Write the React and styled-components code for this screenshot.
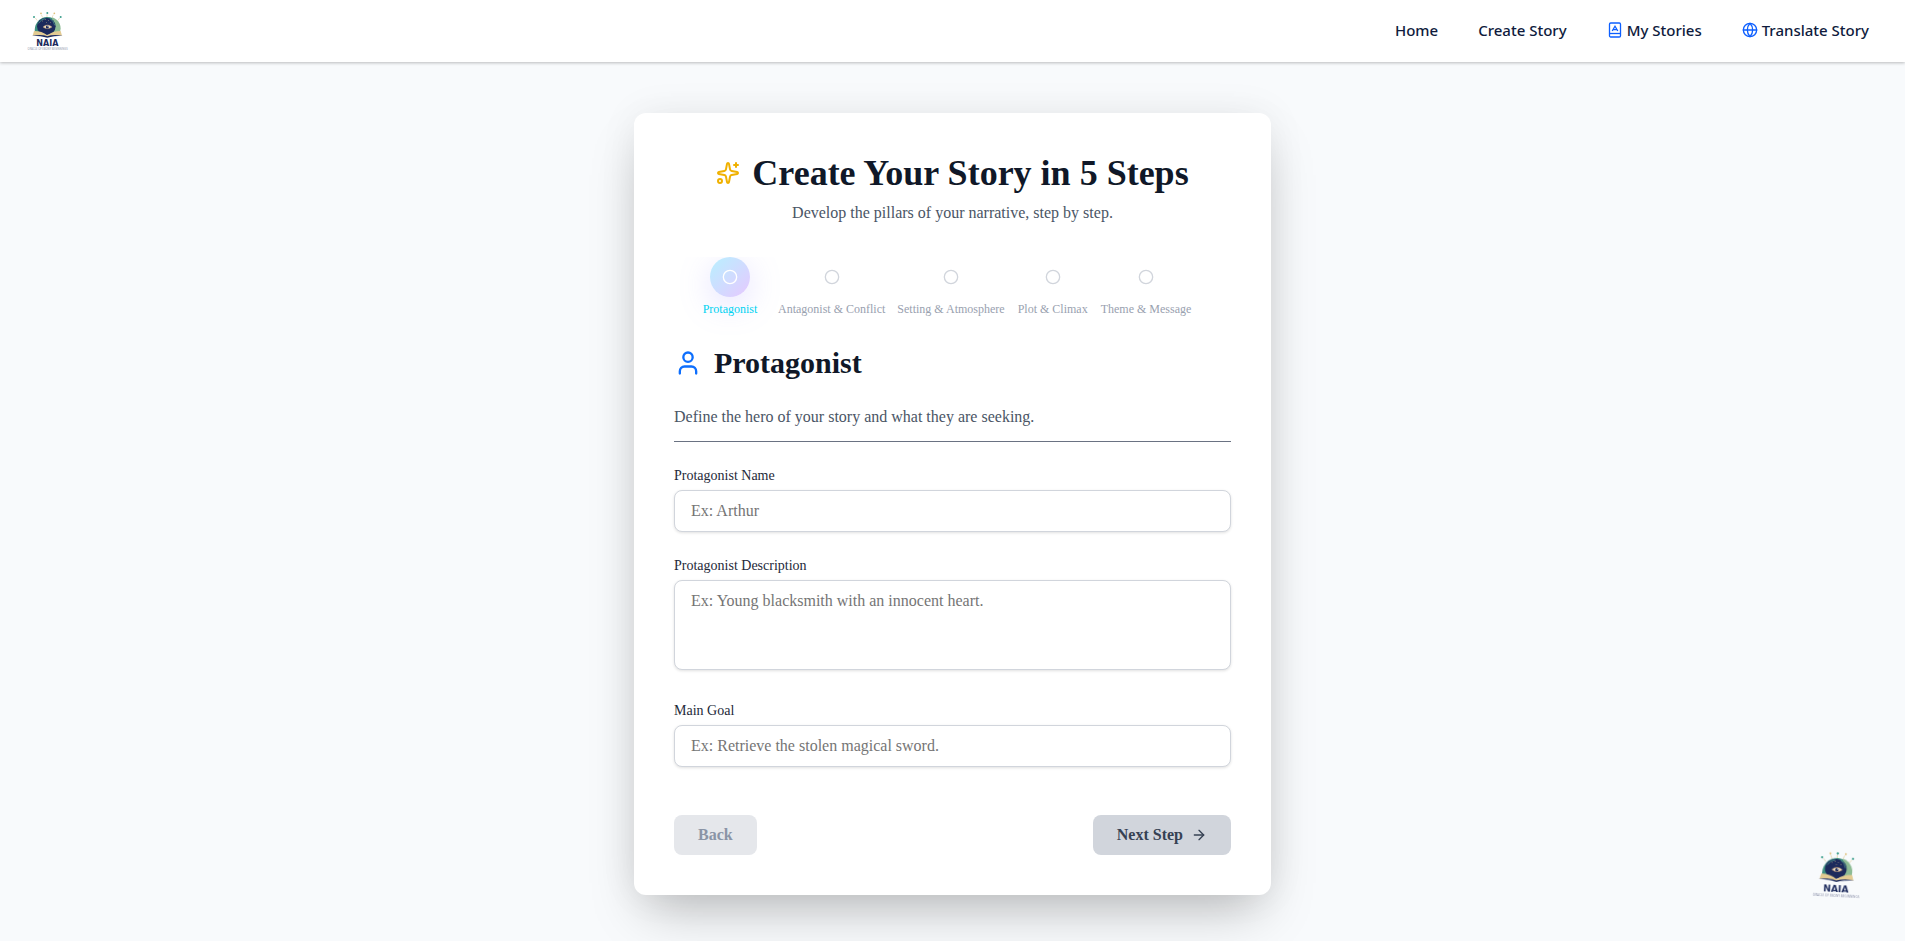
import React from 'react'
import styled, { createGlobalStyle, css } from 'styled-components'
import { ArrowRight, Circle, Globe, Sparkles, User } from 'lucide-react'

const steps = [
  'Protagonist',
  'Antagonist & Conflict',
  'Setting & Atmosphere',
  'Plot & Climax',
  'Theme & Message'
]

const BookIcon = () => (
  <svg width='16' height='16' viewBox='0 0 16 16' fill='none' stroke='currentColor' strokeWidth='1.3' aria-hidden='true'>
    <rect x='2.5' y='1' width='11' height='14' rx='1.2' />
    <path d='M2.5 11.5h11' />
    <path d='M5.2 9 8 4.2 10.8 9M6.3 7.6h3.4' />
  </svg>
)

const NaiaLogo = () => (
  <svg viewBox='80 28 132 126' role='img' aria-label='NAIA'>
    <path d='M108 52l6 8M126 42l4 9M143 41v8M162 42l-4 9M181 52l-6 8' stroke='#d8c48a' strokeWidth='1.5' />
    <circle cx='104' cy='49' r='3' fill='#3fa08e' />
    <circle cx='125' cy='38' r='2.6' fill='#e0bf7a' />
    <circle cx='144' cy='37' r='3' fill='#3fa08e' />
    <circle cx='165' cy='38' r='2.6' fill='#e0bf7a' />
    <circle cx='184' cy='49' r='3' fill='#3fa08e' />
    <path d='M107 98a38 40 0 1 1 74 0z' fill='#3d8f7f' />
    <path d='M158 50a36 34 0 0 1 22 48h-16z' fill='#8dbb94' />
    <ellipse cx='141' cy='77' rx='28' ry='26' fill='#1c2a5c' />
    <path d='M118 68q8-14 20-14M152 54q12 6 14 20' stroke='#4fa393' strokeWidth='2' fill='none' />
    <g fill='#d9c48c'>
      <circle cx='130' cy='61' r='1.2' />
      <circle cx='138' cy='57' r='1.2' />
      <circle cx='147' cy='60' r='1.2' />
      <circle cx='154' cy='65' r='1.2' />
      <circle cx='142' cy='66' r='1.2' />
    </g>
    <path d='M131 79q13-12 27 0-14 10-27 0z' fill='#f2e3c4' stroke='#b98c6a' strokeWidth='1.5' />
    <circle cx='144' cy='79' r='4.5' fill='#1c2a5c' />
    <circle cx='146' cy='77' r='1.5' fill='#fff' />
    <path d='M104 91q24 0 40 13 16-13 40-13l4 14q-26-5-44 4-18-9-44-4z' fill='#e3cb92' />
    <path d='M98 105q30-5 46 2 16-7 46-2-28 0-46 6-18-6-46-6z' fill='#1c2a5c' />
    <LogoName x='144' y='137'>NAIA</LogoName>
    <LogoTag x='145' y='149'>ORACLE OF EBONY BEGINNINGS</LogoTag>
  </svg>
)

const Field = ({ id, label, children }) => (
  <FieldGroup>
    <Label htmlFor={id}>{label}</Label>
    {children}
  </FieldGroup>
)

const App = () => {
  return (
    <>
      <GlobalStyle />
      <Header>
        <HomeLink href='#home'>
          <NaiaLogo />
        </HomeLink>
        <Nav>
          <NavLink href='#home'>Home</NavLink>
          <NavLink href='#create'>Create Story</NavLink>
          <NavLink href='#stories'>
            <BookIcon />
            My Stories
          </NavLink>
          <NavLink href='#translate'>
            <Globe size={16} />
            Translate Story
          </NavLink>
        </Nav>
      </Header>
      <Main>
        <Card>
          <Title>
            <Sparkles size={24} />
            Create Your Story in 5 Steps
          </Title>
          <Subtitle>Develop the pillars of your narrative, step by step.</Subtitle>
          <Stepper>
            {steps.map((step, i) => (
              <Step key={step} $active={i === 0}>
                <StepDot $active={i === 0}>
                  <Circle size={16} />
                </StepDot>
                {step}
              </Step>
            ))}
          </Stepper>
          <SectionTitle>
            <User size={28} />
            Protagonist
          </SectionTitle>
          <SectionText>Define the hero of your story and what they are seeking.</SectionText>
          <form onSubmit={e => e.preventDefault()}>
            <Field id='name' label='Protagonist Name'>
              <Input id='name' type='text' placeholder='Ex: Arthur' />
            </Field>
            <Field id='description' label='Protagonist Description'>
              <TextArea id='description' rows='3' placeholder='Ex: Young blacksmith with an innocent heart.' />
            </Field>
            <Field id='goal' label='Main Goal'>
              <Input id='goal' type='text' placeholder='Ex: Retrieve the stolen magical sword.' />
            </Field>
            <Actions>
              <Button type='button' disabled>
                Back
              </Button>
              <Button type='submit' $next>
                Next Step
                <ArrowRight size={16} />
              </Button>
            </Actions>
          </form>
        </Card>
      </Main>
      <FloatingButton type='button' aria-label='NAIA'>
        <NaiaLogo />
      </FloatingButton>
    </>
  )
}

export default App

const GlobalStyle = createGlobalStyle`
  *, *::before, *::after {
    box-sizing: border-box;
  }
  body {
    margin: 0;
    background: #f8fafc;
    color: #101828;
    font-family: 'Liberation Serif', 'Times New Roman', serif;
    font-size: 16px;
    line-height: 24px;
  }
  h1, h2, p, ol {
    margin: 0;
    padding: 0;
  }
`

const LogoName = styled.text`
  font: bold 24px 'DejaVu Sans', sans-serif;
  fill: #1c2a5c;
  text-anchor: middle;
`

const LogoTag = styled.text`
  font: 8px 'Open Sans', sans-serif;
  fill: #8a8fa8;
  text-anchor: middle;
`

const Header = styled.header`
  position: relative;
  display: flex;
  align-items: center;
  justify-content: space-between;
  padding: 10px 36px 10px 26px;
  background: #fff;
  box-shadow: 0 1px 3px rgba(0, 0, 0, 0.25);
`

const HomeLink = styled.a`
  display: block;
  width: 44px;
  height: 42px;
`

const Nav = styled.nav`
  display: flex;
  gap: 40px;
  padding-bottom: 2px;
`

const NavLink = styled.a`
  display: flex;
  align-items: center;
  gap: 4px;
  color: #0f1b3d;
  font-family: 'Noto Sans', sans-serif;
  font-size: 15px;
  font-weight: 500;
  text-decoration: none;
  svg {
    color: #0d5fff;
  }
`

const Main = styled.main`
  display: flex;
  justify-content: center;
  padding: 51px 16px 46px;
`

const Card = styled.section`
  width: 100%;
  max-width: 637px;
  padding: 40px;
  border-radius: 12px;
  background: #fff;
  box-shadow: 0 25px 50px -12px rgba(0, 0, 0, 0.25), 0 0 40px rgba(0, 0, 0, 0.06);
`

const Title = styled.h1`
  display: flex;
  align-items: center;
  justify-content: center;
  gap: 12px;
  font-size: 36px;
  line-height: 40px;
  svg {
    color: #f0b100;
  }
`

const Subtitle = styled.p`
  margin-top: 8px;
  color: #4a5565;
  text-align: center;
`

const Stepper = styled.ol`
  display: flex;
  gap: 8px;
  margin-top: 32px;
  padding: 0 18px;
  overflow-x: auto;
  list-style: none;
`

const Step = styled.li`
  display: flex;
  flex-direction: column;
  align-items: center;
  gap: 4px;
  min-width: 76px;
  padding: 0 2px 28px;
  color: ${({ $active }) => ($active ? '#00d3f2' : '#99a1af')};
  font-size: 12px;
  line-height: 16px;
  white-space: nowrap;
`

const StepDot = styled.span`
  display: flex;
  align-items: center;
  justify-content: center;
  width: 40px;
  height: 40px;
  border-radius: 50%;
  color: #d1d5dc;
  ${({ $active }) =>
    $active &&
    css`
      color: #fff;
      background: linear-gradient(135deg, #b8f0ff, #e6c8ff);
      box-shadow: 0 8px 32px rgba(150, 140, 255, 0.25);
    `}
`

const SectionTitle = styled.h2`
  display: flex;
  align-items: center;
  gap: 12px;
  font-size: 30px;
  line-height: 36px;
  svg {
    color: #0d6efd;
  }
`

const SectionText = styled.p`
  margin: 24px 0;
  padding-bottom: 12px;
  border-bottom: 1px solid #6a7282;
  color: #4a5565;
`

const FieldGroup = styled.div`
  margin-bottom: 24px;
`

const Label = styled.label`
  display: block;
  margin-bottom: 4px;
  color: #1e2939;
  font-size: 14px;
  line-height: 20px;
`

const control = css`
  width: 100%;
  padding: 8px 16px;
  border: 1px solid #d1d5dc;
  border-radius: 8px;
  background: #fff;
  box-shadow: 0 1px 3px rgba(0, 0, 0, 0.12);
  font: inherit;
  &::placeholder {
    color: #757575;
  }
`

const Input = styled.input`
  ${control}
  display: block;
`

const TextArea = styled.textarea`
  ${control}
  resize: none;
`

const Actions = styled.div`
  display: flex;
  justify-content: space-between;
  margin-top: 48px;
`

const Button = styled.button`
  display: flex;
  align-items: center;
  gap: 8px;
  padding: 8px 24px;
  border: 0;
  border-radius: 8px;
  background: ${({ $next }) => ($next ? '#d1d5dc' : '#e5e7eb')};
  color: ${({ $next }) => ($next ? '#364153' : '#8a94a6')};
  font: inherit;
  font-weight: 600;
`

const FloatingButton = styled.button`
  position: fixed;
  right: 42px;
  bottom: 42px;
  width: 51px;
  height: 49px;
  padding: 0;
  border: 0;
  background: none;
  transform: rotate(3deg);
`
